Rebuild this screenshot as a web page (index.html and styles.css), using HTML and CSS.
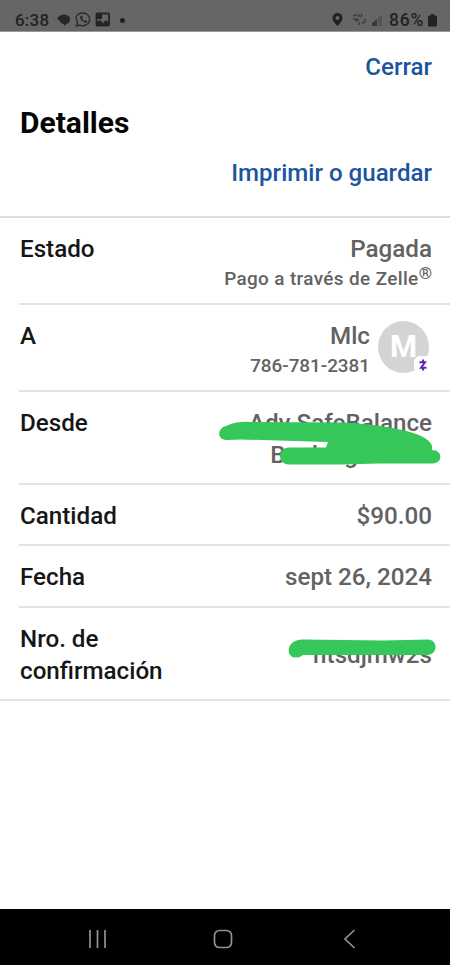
FILE: index.html
```html
<!DOCTYPE html>
<html lang="es">
<head>
<meta charset="utf-8">
<title>Detalles</title>
<link rel="stylesheet" href="styles.css">
</head>
<body>
<div class="status">
  <span class="time">6:38</span>
  <svg class="left-icons" width="66" height="18" viewBox="0 0 66 18">
    <path d="M1 6.500Q3 3.500 7 3.500Q13 4 13 8Q13 12 9.500 13L7 15V13Q3 12.500 3 10L0 8Z" fill="#262626"/>
    <path d="M19.500 15L20.500 11Q17 5 22.500 2.500Q29 .5 32 5.500Q34 11 29 14Q25.500 15.500 23 14Z" fill="none" stroke="#2c2c2c" stroke-width="1.400"/>
    <path d="M23 5.500Q23 10.500 29 12L30.500 10L28.500 9L27.500 10Q26 9 25 7.500L26 6.500L25 4.500Z" fill="#2c2c2c"/>
    <rect x="39.500" y="2.500" width="12.500" height="12" rx="1" fill="none" stroke="#242424" stroke-width="1.800"/>
    <path d="M40 3H45V8H40ZM40 14V11L43 9L46 12L49 9L52 12V14Z" fill="#242424"/>
  </svg>
  <span class="dot"></span>
  <svg class="right-icons" width="54" height="18" viewBox="0 0 54 18">
    <path fill-rule="evenodd" d="M6.500 2A5 5 0 0 0 1.500 7Q1.500 10 6.500 15Q11.500 10 11.500 7A5 5 0 0 0 6.500 2ZM6.500 5A2 2 0 1 1 6.500 9A2 2 0 1 1 6.500 5Z" fill="#202020"/>
    <g fill="none" stroke="#3d3d3d" stroke-width="1.500"><path d="M22 5L26 4M22 8H27M28 3V6M31 3L30 6M24 10L28 9M28 11V14M33 8L35 10M31 12L34 11"/></g>
    <path d="M41 15V12L46 8V15Z" fill="#393939"/><path d="M47 15V7L51 3V15Z" fill="#555"/>
  </svg>
  <span class="battery">86%</span>
  <svg class="cell" width="9" height="13" viewBox="0 0 9 13"><path d="M3 0H6V1.500H8Q9 1.500 9 3V11Q9 12.500 8 12.500H1Q0 12.500 0 11V3Q0 1.500 1 1.500H3Z" fill="#222"/></svg>
</div>
<main>
  <header>
    <a class="close">Cerrar</a>
    <h1>Detalles</h1>
    <a class="print">Imprimir o guardar</a>
  </header>
  <section class="rows">
    <div class="row estado"><div class="label">Estado</div><div class="value"><div>Pagada</div><div class="sub zelle">Pago a través de Zelle<span class="reg">®</span></div></div></div>
    <div class="row para"><div class="label">A</div><div class="value person"><div><div>Mlc</div><div class="sub phone">786-781-2381</div></div>
      <div class="avatar"><span>M</span><div class="badge"><svg width="12" height="14" viewBox="0 0 12 14"><path d="M2.500 4.300H8L4 9.700H9.500M6 1.500V4M6 10V12.500" fill="none" stroke="#6424ad" stroke-width="2"/></svg></div></div></div></div>
    <div class="row desde"><div class="label">Desde</div><div class="value"><div>Adv SafeBalance</div><div class="bank">Banking</div></div>
      <svg class="mark" width="230" height="60" viewBox="215 410 230 60"><path d="M226 440C218 440 216 429 226 426Q237 421 251 422L340 422.500Q371 423 402 430Q429 436 432 446L432 450C443 450 443 463 433 463.500L380 463.500L340 464.500H289C277 464 277 448 289 447.500H326L328 442L241 439.500Z" fill="#35c759"/></svg></div>
    <div class="row cantidad"><div class="label">Cantidad</div><div class="value">$90.00</div></div>
    <div class="row fecha"><div class="label">Fecha</div><div class="value">sept 26, 2024</div></div>
    <div class="row nro"><div class="label">Nro. de<br>confirmación</div><div class="value code">ntsdjmw2s</div>
      <svg class="mark mark-code" width="150" height="24" viewBox="287 636 150 24"><path d="M296 657.500C288 658 287 649 291 644Q295 639.500 303 639.500L384 640.500L428 639.500C438 640 438 654 428 655H303Q300 657.500 296 657.500Z" fill="#35c759"/></svg></div>
  </section>
</main>
<nav>
  <svg width="450" height="56" viewBox="0 0 450 56" fill="none" stroke="#929292" stroke-width="1.700"><path d="M90 21V39M97.500 21V39M105 21V39M354.500 21L345 30L354.500 39"/><rect x="214.500" y="21.500" width="17" height="17" rx="5"/></svg>
</nav>
</body>
</html>
```
FILE: styles.css
```css
* { box-sizing: border-box; }
body { margin: 0; width: 450px; height: 965px; display: flex; flex-direction: column; overflow: hidden; background: #fff; font-family: Roboto, sans-serif; color: #161616; }
.status { height: 32px; flex: none; display: flex; align-items: center; padding: 9px 13px 0 15px; background: #666; border-bottom: 1px solid #999; color: #222; font-weight: 500; }
.time { width: 42px; font-size: 17px; letter-spacing: .2px; line-height: 20px; }
.left-icons, .right-icons, .cell { flex: none; }
.dot { width: 5px; height: 5px; border-radius: 50%; background: #222; margin-left: -3px; }
.right-icons { margin-left: auto; }
.battery { font-size: 17.500px; letter-spacing: .8px; width: 38px; margin-left: 4px; line-height: 20px; }
.cell { margin-left: 1px; }
main { flex: 1; }
header { height: 186px; padding: 20px 18px 0 20px; display: flex; flex-direction: column; border-bottom: 2px solid #dedede; }
header a { align-self: flex-end; color: #1b559f; font-weight: 500; font-size: 24.100px; line-height: 30px; }
h1 { margin: 23px 0 0; font-size: 30px; line-height: 36px; font-weight: 700; color: #050505; }
.print { margin-top: 17px; }
.rows { border-bottom: 2px solid #e2e2e2; }
.row { position: relative; display: flex; justify-content: space-between; margin-left: 19px; padding: 16px 18px 0 1px; font-size: 24.200px; line-height: 31.500px; font-weight: 500; border-bottom: 2px solid #e4e4e4; }
.row:last-child { border-bottom: 0; }
.estado { height: 87px; }
.para { height: 87px; }
.desde { height: 93px; }
.cantidad { height: 61px; }
.fecha { height: 62px; }
.nro { height: 91px; }
.value { color: #626262; text-align: right; white-space: nowrap; }
.sub { font-size: 18.900px; line-height: 26px; }
.zelle { letter-spacing: .38px; }
.phone { letter-spacing: -.03px; }
.reg { font-size: 17px; line-height: 0; letter-spacing: 0; position: relative; top: -6px; }
.person { display: flex; gap: 8px; }
.avatar { position: relative; width: 51px; height: 52px; border-radius: 50%; background: #d4d4d4; color: #fff; text-align: center; font-weight: 700; font-size: 31px; line-height: 52px; margin-right: 3px; }
.badge { position: absolute; right: -3px; bottom: -1px; width: 18px; height: 18px; border-radius: 6px; background: #fff; display: flex; align-items: center; justify-content: center; }
.bank { padding-right: 74px; }
.mark { position: absolute; left: 196px; top: 18px; }
.code { padding-top: 16px; }
.mark-code { left: 268px; top: 28px; }
nav { height: 56px; flex: none; background: #000; }
nav svg { display: block; }
```
